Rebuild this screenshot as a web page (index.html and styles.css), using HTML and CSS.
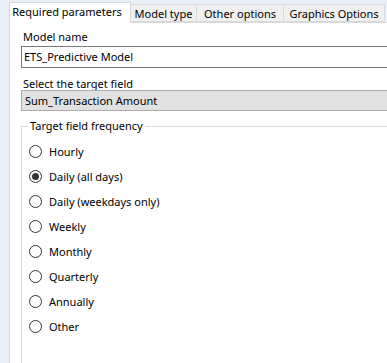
FILE: index.html
```html
<!DOCTYPE html>
<html>
<head>
<meta charset="utf-8">
	<title>ETS - Required parameters</title>
	<link rel="stylesheet" href="styles.css">
</head>
<body>
	<div class="dialog">
		<div class="tabs">
			<div class="tab active">Required parameters</div>
			<div class="tab t2">Model type</div>
			<div class="tab t3">Other options</div>
			<div class="tab t4">Graphics Options</div>
		</div>
		<div class="panel">
			<div class="label">Model name</div>
			<div class="textBox">ETS_Predictive Model</div>
			<div class="label second">Select the target field</div>
			<div class="combo">Sum_Transaction Amount</div>
			<fieldset class="group">
				<legend>Target field frequency</legend>
				<div class="radio"><span class="dot"></span>Hourly</div>
				<div class="radio"><span class="dot checked"></span>Daily (all days)</div>
				<div class="radio"><span class="dot"></span>Daily (weekdays only)</div>
				<div class="radio"><span class="dot"></span>Weekly</div>
				<div class="radio"><span class="dot"></span>Monthly</div>
				<div class="radio"><span class="dot"></span>Quarterly</div>
				<div class="radio"><span class="dot"></span>Annually</div>
				<div class="radio"><span class="dot"></span>Other</div>
			</fieldset>
		</div>
	</div>
</body>
</html>
```
FILE: styles.css
```css
html, body{
	margin: 0px;
	padding: 0px;
	height: 100%;
	overflow: hidden;
}
body{
	background-color: #eaf0f9;
	font-family: "Noto Sans", "Open Sans", sans-serif;
	font-size: 11px;
	color: #000;
}
.dialog{
	width: 100%;
	height: 100%;
	display: flex;
	flex-direction: column;
	padding-left: 9px;
	box-sizing: border-box;
}
.tabs{
	display: flex;
	align-items: flex-end;
	height: 23px;
	box-sizing: border-box;
	padding-top: 2px;
	position: relative;
	z-index: 1;
}
.tab{
	height: 18px;
	line-height: 17px;
	box-sizing: border-box;
	background-color: #f0f0f0;
	border: 1px solid #d9d9d9;
	border-left: none;
	text-align: center;
	margin-bottom: 1px;
}
.tab.active{
	height: 21px;
	line-height: 18px;
	width: 122px;
	background-color: #fff;
	border-left: 1px solid #d9d9d9;
	border-bottom: none;
	margin-bottom: 0px;
	padding-right: 6px;
}
.t2{ width: 66px; }
.t3{ width: 87px; }
.t4{ width: 101px; }
.panel{
	flex: 1;
	display: flex;
	flex-direction: column;
	background-color: #fff;
	border-top: 1px solid #d9d9d9;
	border-left: 1px solid #d9d9d9;
	margin-top: -1px;
	padding: 6px 0px 0px 11px;
}
.label{
	line-height: 16px;
	padding-left: 2px;
}
.label.second{
	line-height: 13px;
	margin-top: 9px;
}
.textBox{
	margin-top: 1px;
	height: 22px;
	line-height: 19px;
	box-sizing: border-box;
	border: 1px solid #7a7a7a;
	border-right: none;
	padding-left: 2px;
}
.combo{
	height: 21px;
	line-height: 19px;
	box-sizing: border-box;
	background-color: #e1e1e1;
	border: 1px solid #adadad;
	border-right: none;
	padding-left: 3px;
}
.group{
	flex: 1;
	margin: 7px 0px 0px 0px;
	padding: 5px 0px 0px 7px;
	border: 1px solid #dcdcdc;
	border-right: none;
	border-bottom: none;
	min-width: 0px;
}
.group legend{
	padding: 0px 2px;
	margin-left: -1px;
	line-height: 16px;
}
.radio{
	height: 25px;
	display: flex;
	align-items: center;
}
.dot{
	width: 11px;
	height: 11px;
	border: 1px solid #333;
	border-radius: 50%;
	margin-right: 7px;
	display: flex;
	align-items: center;
	justify-content: center;
}
.dot.checked::after{
	content: "";
	width: 7px;
	height: 7px;
	border-radius: 50%;
	background-color: #333;
}
```
